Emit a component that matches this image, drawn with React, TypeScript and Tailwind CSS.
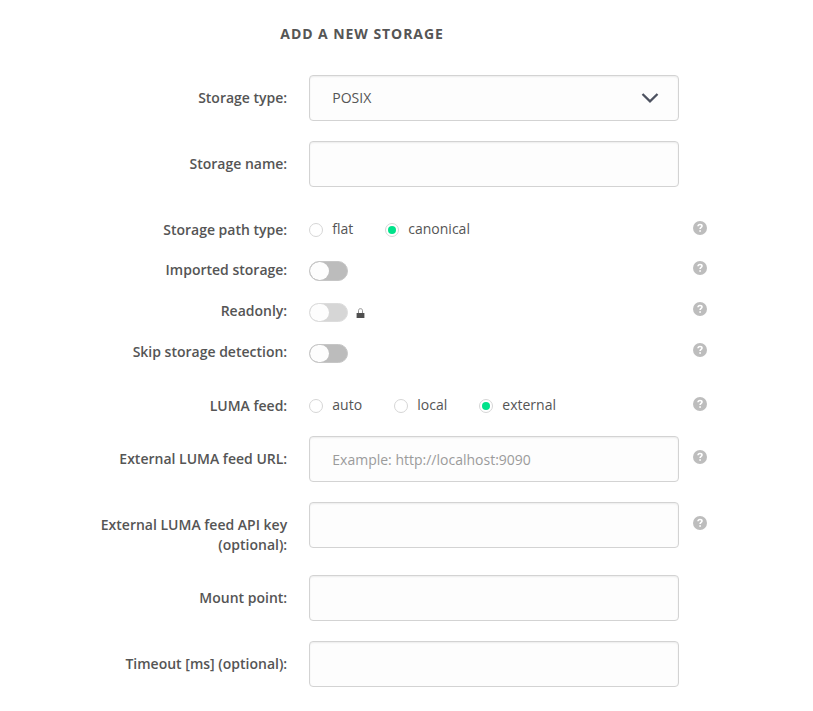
import React from 'react';

type RowProps = {
  label: React.ReactNode;
  height: string;
  help?: boolean;
  children: React.ReactNode;
};

function HelpIcon() {
  return (
    <svg width="14" height="14" viewBox="0 0 14 14" className="mt-[14px] ml-[14px] shrink-0" aria-label="Help">
      <circle cx="7" cy="7" r="7" fill="#bdbdbd" />
      <path d="M5 5.3C5.1 4 5.9 3.5 7 3.5c1.2 0 2 .65 2 1.6C9 6.4 7.1 6.5 7.1 8.1" fill="none" stroke="#fff" strokeWidth="1.6" />
      <rect x="6.3" y="9.2" width="1.6" height="1.6" fill="#fff" />
    </svg>
  );
}

function Row({ label, height, help, children }: RowProps) {
  return (
    <div className={`flex items-start ${height}`}>
      <div className="w-[287.2px] shrink-0 pt-[13px] text-right font-semibold leading-5">{label}</div>
      <div className="ml-[21.8px] w-[370px] shrink-0">{children}</div>
      {help && <HelpIcon />}
    </div>
  );
}

const fieldClass =
  'block h-[46px] w-full rounded-[4px] border border-[#d3d3d3] bg-[#fdfdfd] px-[22.3px] text-sm shadow-[inset_0_1px_2px_rgba(0,0,0,0.07)] outline-none placeholder:text-[#9b9b9b] placeholder:opacity-100';

function Field({ placeholder }: { placeholder?: string }) {
  return <input className={fieldClass} placeholder={placeholder} />;
}

function Radio({ label, checked, width }: { label: string; checked?: boolean; width: string }) {
  return (
    <label className={`flex items-start ${width}`}>
      <span className="mt-[16px] flex size-[14px] shrink-0 items-center justify-center rounded-full border border-[#d6d6d6] bg-white">
        {checked && <span className="size-2 rounded-full bg-[#00e28a]" />}
      </span>
      <span className="ml-[9.3px] mt-[12px] leading-5">{label}</span>
    </label>
  );
}

function Toggle({ className }: { className: string }) {
  return (
    <span className={`block w-[39px] overflow-hidden rounded-full border border-[#c6c6c6] bg-[#bcbcbc] ${className}`}>
      <span className="block h-full w-[19px] rounded-full bg-[#fdfdfd]" />
    </span>
  );
}

function Lock() {
  return (
    <svg width="9" height="11" viewBox="0 0 9 11" className="ml-[8px] mt-[20px]" aria-label="Locked">
      <path d="M2.5 6V2.7C2.5 1.3 3.2.7 4.5.7s2 .6 2 2V6" fill="none" stroke="#888" strokeWidth="0.9" />
      <rect x="0.6" y="5" width="7.8" height="5" fill="#4f4f4f" />
    </svg>
  );
}

export default function App() {
  return (
    <main className="h-[711px] w-[813px] overflow-hidden bg-white font-['Open_Sans',sans-serif] text-sm text-[#555]">
      <h1 className="h-[75px] pl-[280.3px] pt-6 text-sm font-bold leading-5 tracking-[0.94px]">ADD A NEW STORAGE</h1>
      <form>
        <Row label="Storage type:" height="h-[66px]">
          <div className={`${fieldClass} flex items-center justify-between`}>
            <span className="-mt-px">POSIX</span>
            <svg width="18" height="12" viewBox="0 0 18 12" className="-mr-[3px]">
              <path d="M1.5 2 9 9.3 16.5 2" fill="none" stroke="#4d5260" strokeWidth="2.3" />
            </svg>
          </div>
        </Row>
        <Row label="Storage name:" height="h-[66px]"><Field /></Row>
        <Row label="Storage path type:" height="h-[40px]" help>
          <div className="flex">
            <Radio label="flat" width="w-[76px]" />
            <Radio label="canonical" width="w-[100px]" checked />
          </div>
        </Row>
        <Row label="Imported storage:" height="h-[41px]" help><Toggle className="mt-[14px] h-5" /></Row>
        <Row label="Readonly:" height="h-[41px]" help>
          <div className="flex">
            <Toggle className="mt-[15px] h-[19px] opacity-60" />
            <Lock />
          </div>
        </Row>
        <Row label="Skip storage detection:" height="h-[54px]" help><Toggle className="mt-[15px] h-[19px]" /></Row>
        <Row label="LUMA feed:" height="h-[53px]" help>
          <div className="flex">
            <Radio label="auto" width="w-[85px]" />
            <Radio label="local" width="w-[85px]" />
            <Radio label="external" width="w-[100px]" checked />
          </div>
        </Row>
        <Row label="External LUMA feed URL:" height="h-[66px]" help><Field placeholder="Example: http://localhost:9090" /></Row>
        <Row label={<>External LUMA feed API key<br />(optional):</>} height="h-[73px]" help><Field /></Row>
        <Row label="Mount point:" height="h-[66px]"><Field /></Row>
        <Row label="Timeout [ms] (optional):" height="h-[66px]"><Field /></Row>
      </form>
    </main>
  );
}
